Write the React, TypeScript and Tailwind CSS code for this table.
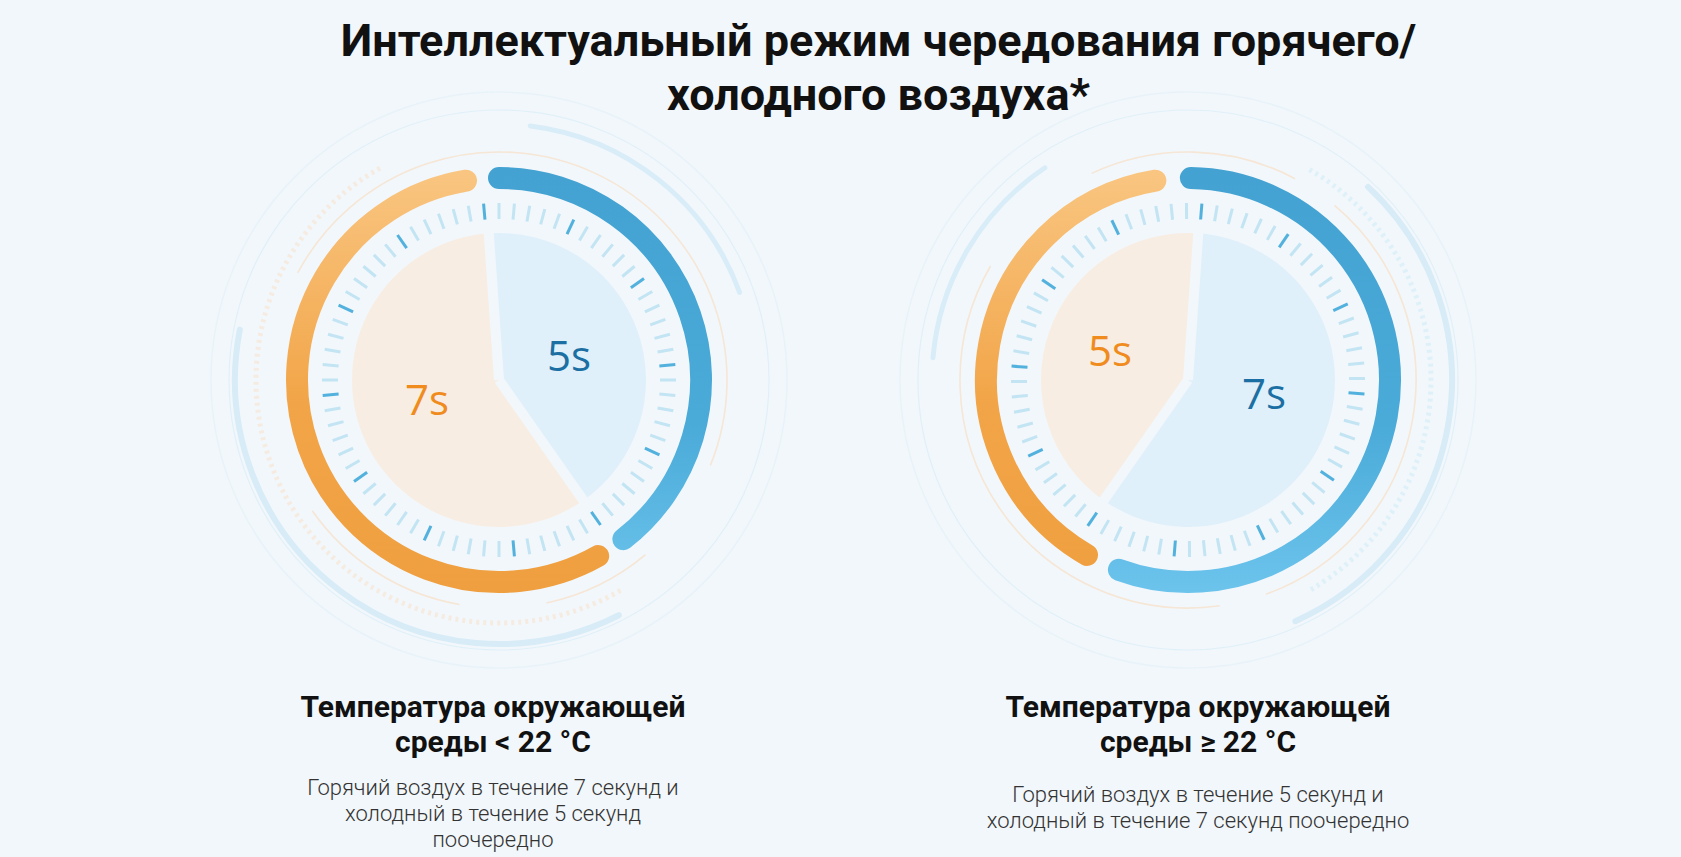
import React from "react"

type Arc = [number, number]

type GaugeProps = {
	cx: number
	split: [number, number]
	blueArc: Arc
	orangeArc: Arc
	tickOffset: number
	hotLabel: { dx: number; dy: number }
	coldLabel: { dx: number; dy: number }
	hotText: string
	coldText: string
	side: "left" | "right"
}

const CY = 300
const BG = "#f2f7fb"

const pt = (cx: number, cy: number, r: number, deg: number) => {
	const a = (deg * Math.PI) / 180
	return [cx + r * Math.sin(a), cy - r * Math.cos(a)]
}

const arc = (cx: number, cy: number, r: number, a1: number, a2: number) => {
	const [x1, y1] = pt(cx, cy, r, a1)
	const [x2, y2] = pt(cx, cy, r, a2)
	const large = a2 - a1 > 180 ? 1 : 0
	return `M ${x1} ${y1} A ${r} ${r} 0 ${large} 1 ${x2} ${y2}`
}

const slice = (cx: number, cy: number, r: number, a1: number, a2: number) => {
	const [x1, y1] = pt(cx, cy, r, a1)
	const [x2, y2] = pt(cx, cy, r, a2)
	const large = a2 - a1 > 180 ? 1 : 0
	return `M ${cx} ${cy} L ${x1} ${y1} A ${r} ${r} 0 ${large} 1 ${x2} ${y2} Z`
}

const Gauge = ({ cx, split, blueArc, orangeArc, tickOffset, hotLabel, coldLabel, hotText, coldText, side }: GaugeProps) => {
	const id = side
	const [s1, s2] = split
	const ticks = Array.from({ length: 72 }, (_, i) => {
		const a = tickOffset + i * 5
		const [x1, y1] = pt(cx, CY, 161, a)
		const [x2, y2] = pt(cx, CY, 177, a)
		const major = i % 6 === 0
		return <line key={i} x1={x1} y1={y1} x2={x2} y2={y2} stroke={major ? "#52b1dd" : "#c2e4f3"} strokeWidth={3} />
	})

	// faint rings round the dial
	const thick: Arc[] = side === "left" ? [[153, 281]] : [[43, 156]]
	const small: Arc[] = side === "left" ? [[7, 70]] : [[275, 326]]
	const dotted: Arc[] = side === "left" ? [[150, 331]] : [[30, 150]]
	const orangeThin: Arc[] = side === "left" ? [[-62, 112], [140, 168], [190, 235]] : [[-25, 28], [40, 160], [172, 300]]

	return (
		<svg width={600} height={600} viewBox="0 0 600 600" className="block">
			<defs>
				<linearGradient id={`o-${id}`} x1="0" y1={CY - 213} x2="0" y2={CY + 213} gradientUnits="userSpaceOnUse">
					<stop offset="0" stopColor="#f9c682" />
					<stop offset="0.55" stopColor="#f2a548" />
					<stop offset="1" stopColor="#ef9f3f" />
				</linearGradient>
				<linearGradient id={`b-${id}`} x1="0" y1={CY - 213} x2="0" y2={CY + 213} gradientUnits="userSpaceOnUse">
					<stop offset="0" stopColor="#43a2d1" />
					<stop offset="0.6" stopColor="#4aaad8" />
					<stop offset="1" stopColor="#6cc4ec" />
				</linearGradient>
			</defs>

			<circle cx={cx} cy={CY} r={288} fill="none" stroke="#e8f3f9" strokeWidth={1.5} />
			<circle cx={cx} cy={CY} r={270} fill="none" stroke="#e0f0f8" strokeWidth={1.2} />
			{thick.map(([a, b], i) => (
				<path key={`t${i}`} d={arc(cx, CY, 264, a, b)} fill="none" stroke="#d7ecf7" strokeWidth={6} strokeLinecap="round" />
			))}
			{small.map(([a, b], i) => (
				<path key={`s${i}`} d={arc(cx, CY, 256, a, b)} fill="none" stroke="#d9edf8" strokeWidth={5} strokeLinecap="round" />
			))}
			{dotted.map(([a, b], i) => (
				<path key={`d${i}`} d={arc(cx, CY, 243, a, b)} fill="none" stroke={side === "left" ? "#f5ebe1" : "#def0f8"} strokeWidth={5} strokeDasharray="3 4" />
			))}
			{orangeThin.map(([a, b], i) => (
				<path key={`o${i}`} d={arc(cx, CY, 228, a, b)} fill="none" stroke="#f6e6d5" strokeWidth={1.6} />
			))}

			<path d={arc(cx, CY, 202, orangeArc[0], orangeArc[1])} fill="none" stroke={`url(#o-${id})`} strokeWidth={22} strokeLinecap="round" />
			<path d={arc(cx, CY, 202, blueArc[0], blueArc[1])} fill="none" stroke={`url(#b-${id})`} strokeWidth={22} strokeLinecap="round" />

			{ticks}

			<path d={slice(cx, CY, 147, s1, s2)} fill="#dff0fa" />
			<path d={slice(cx, CY, 147, s2, s1 + 360)} fill="#f8ede3" />
			{[s1, s2].map((a) => {
				const [x, y] = pt(cx, CY, 150, a)
				return <line key={a} x1={cx} y1={CY} x2={x} y2={y} stroke={BG} strokeWidth={10} />
			})}

			<text x={cx + hotLabel.dx} y={CY + hotLabel.dy} textAnchor="middle" fill="#ef8c1d" fontSize={42} fontFamily="'Open Sans', sans-serif">
				{hotText}
			</text>
			<text x={cx + coldLabel.dx} y={CY + coldLabel.dy} textAnchor="middle" fill="#1b6fa3" fontSize={42} fontFamily="'Open Sans', sans-serif">
				{coldText}
			</text>
		</svg>
	)
}

const App = () => {
	return (
		<div className="min-h-[857px] bg-[#f2f7fb] font-['Roboto',sans-serif] text-[#111] overflow-hidden">
			<h1 className="relative z-10 pt-[14px] pl-[76px] text-center text-[45px] leading-[54px] font-bold">
				Интеллектуальный режим чередования горячего/
				<br />
				холодного воздуха*
			</h1>
			<div className="mt-[-42px] flex justify-center gap-[105px] pl-[10px]">
				<div className="w-[600px] flex flex-col items-center">
					<Gauge
						side="left"
						cx={306}
						split={[-4, 145]}
						blueArc={[0, 142]}
						orangeArc={[150.6, 350.6]}
						tickOffset={-5}
						hotLabel={{ dx: -72, dy: 35 }}
						coldLabel={{ dx: 70, dy: -9 }}
						hotText="7s"
						coldText="5s"
					/>
					<h2 className="mt-[9px] text-center text-[30px] leading-[35px] font-bold">
						Температура окружающей
						<br />
						среды &lt; 22 °C
					</h2>
					<p className="mt-[16px] text-center text-[22px] leading-[26px] font-light text-[#333]">
						Горячий воздух в течение 7 секунд и
						<br />
						холодный в течение 5 секунд
						<br />
						поочередно
					</p>
				</div>
				<div className="w-[600px] flex flex-col items-center">
					<Gauge
						side="right"
						cx={290}
						split={[4, 215]}
						blueArc={[0.8, 200]}
						orangeArc={[210, 350.7]}
						tickOffset={4.5}
						hotLabel={{ dx: -78, dy: -14 }}
						coldLabel={{ dx: 76, dy: 29 }}
						hotText="5s"
						coldText="7s"
					/>
					<h2 className="mt-[9px] text-center text-[30px] leading-[35px] font-bold">
						Температура окружающей
						<br />
						среды ≥ 22 °C
					</h2>
					<p className="mt-[23px] text-center text-[22px] leading-[26px] font-light text-[#333]">
						Горячий воздух в течение 5 секунд и
						<br />
						холодный в течение 7 секунд поочередно
					</p>
				</div>
			</div>
		</div>
	)
}

export default App
